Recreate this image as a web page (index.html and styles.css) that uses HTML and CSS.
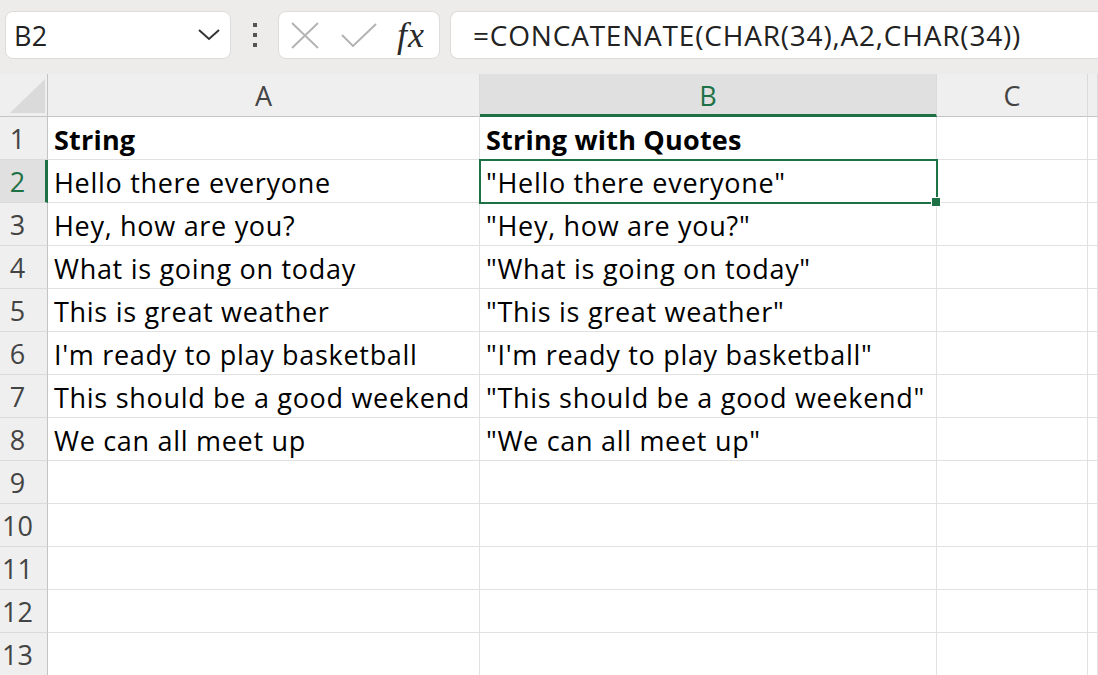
FILE: index.html
```html
<!DOCTYPE html>
<html>
<head>
<meta charset="utf-8">
<link rel="stylesheet" href="styles.css">
</head>
<body>
<div class="toolbar">
  <div class="namebox">
    <span class="name">B2</span>
    <svg class="chev" width="24" height="14" viewBox="0 0 24 14"><path d="M2 2 L12 11 L22 2" fill="none" stroke="#333" stroke-width="2"/></svg>
  </div>
  <div class="dots"><span></span><span></span><span></span></div>
  <div class="fxbox">
    <svg width="28" height="27" viewBox="0 0 28 27"><path d="M1 1 L27 26 M27 1 L1 26" stroke="#b4b4b4" stroke-width="2" fill="none"/></svg>
    <svg width="36" height="24" viewBox="0 0 36 24"><path d="M1 12 L12 23 L35 1" stroke="#b4b4b4" stroke-width="2" fill="none"/></svg>
    <span class="fx">fx</span>
  </div>
  <div class="formula">=CONCATENATE(CHAR(34),A2,CHAR(34))</div>
</div>
<div class="sheet">
  <div class="corner"><div class="tri"></div></div>
  <div class="colhead">A</div>
  <div class="colhead active">B</div>
  <div class="colhead">C</div>
  <div class="colhead"></div>

  <div class="rowhead">1</div><div class="cell bold">String</div><div class="cell bold">String with Quotes</div><div class="cell"></div><div class="cell"></div>
  <div class="rowhead active">2</div><div class="cell">Hello there everyone</div><div class="cell selected">"Hello there everyone"<span class="handle"></span></div><div class="cell"></div><div class="cell"></div>
  <div class="rowhead">3</div><div class="cell">Hey, how are you?</div><div class="cell">"Hey, how are you?"</div><div class="cell"></div><div class="cell"></div>
  <div class="rowhead">4</div><div class="cell">What is going on today</div><div class="cell">"What is going on today"</div><div class="cell"></div><div class="cell"></div>
  <div class="rowhead">5</div><div class="cell">This is great weather</div><div class="cell">"This is great weather"</div><div class="cell"></div><div class="cell"></div>
  <div class="rowhead">6</div><div class="cell">I'm ready to play basketball</div><div class="cell">"I'm ready to play basketball"</div><div class="cell"></div><div class="cell"></div>
  <div class="rowhead">7</div><div class="cell">This should be a good weekend</div><div class="cell">"This should be a good weekend"</div><div class="cell"></div><div class="cell"></div>
  <div class="rowhead">8</div><div class="cell">We can all meet up</div><div class="cell">"We can all meet up"</div><div class="cell"></div><div class="cell"></div>
  <div class="rowhead">9</div><div class="cell"></div><div class="cell"></div><div class="cell"></div><div class="cell"></div>
  <div class="rowhead">10</div><div class="cell"></div><div class="cell"></div><div class="cell"></div><div class="cell"></div>
  <div class="rowhead">11</div><div class="cell"></div><div class="cell"></div><div class="cell"></div><div class="cell"></div>
  <div class="rowhead">12</div><div class="cell"></div><div class="cell"></div><div class="cell"></div><div class="cell"></div>
  <div class="rowhead">13</div><div class="cell"></div><div class="cell"></div><div class="cell"></div><div class="cell"></div>
</div>
</body>
</html>
```
FILE: styles.css
```css
* { box-sizing: border-box; }
html, body { margin: 0; padding: 0; }
body {
  width: 1098px;
  height: 675px;
  overflow: hidden;
  background: #ffffff;
  font-family: "Open Sans", "Noto Sans", sans-serif;
}
.toolbar {
  height: 74px;
  background: #eeecea;
  display: flex;
  align-items: flex-start;
  padding: 11px 0 0 5px;
}
.namebox {
  width: 226px;
  height: 48px;
  background: #fff;
  border: 1px solid #dedcda;
  border-radius: 8px;
  display: flex;
  align-items: center;
  justify-content: space-between;
  padding: 0 9px 0 8px;
}
.name { font-size: 27px; color: #222; letter-spacing: 0.3px; }
.dots {
  width: 47px;
  height: 48px;
  display: flex;
  flex-direction: column;
  align-items: center;
  justify-content: center;
  gap: 6px;
}
.dots span { width: 4px; height: 4px; background: #555; display: block; }
.fxbox {
  width: 162px;
  height: 48px;
  background: #fff;
  border: 1px solid #dedcda;
  border-radius: 8px;
  display: flex;
  align-items: center;
  padding: 0 0 0 12px;
  gap: 22px;
}
.fx {
  font-family: "Liberation Serif", "DejaVu Serif", serif;
  font-style: italic;
  font-size: 36px;
  color: #2a2a2a;
  margin-left: -2px;
  letter-spacing: 1px;
}
.formula {
  margin-left: 10px;
  flex: 1;
  height: 48px;
  background: #fff;
  border: 1px solid #dedcda;
  border-right: none;
  border-radius: 8px 0 0 8px;
  display: flex;
  align-items: center;
  padding-left: 22px;
  font-size: 28px;
  letter-spacing: 0.8px;
  color: #222;
  white-space: nowrap;
}
.sheet {
  display: grid;
  grid-template-columns: 48px 432px 457px 151px 10px;
  grid-template-rows: 43px;
  grid-auto-rows: 43px;
}
.corner {
  background: #efefef;
  border-right: 1px solid #c4c4c4;
  border-bottom: 1px solid #c4c4c4;
  position: relative;
}
.tri {
  position: absolute;
  left: 10px;
  top: 5px;
  width: 35px;
  height: 34px;
  background: #dadada;
  clip-path: polygon(100% 0, 100% 100%, 0 100%);
}
.colhead {
  background: #efefef;
  border-right: 1px solid #dadada;
  border-bottom: 1px solid #c4c4c4;
  display: flex;
  align-items: center;
  justify-content: center;
  font-size: 27px;
  color: #444;
}
.colhead.active {
  background: #e0e0e0;
  color: #1e7145;
  border-bottom: 3px solid #1e7145;
  padding-top: 2px;
}
.rowhead {
  background: #efefef;
  border-right: 1px solid #c4c4c4;
  border-bottom: 1px solid #dadada;
  display: flex;
  align-items: center;
  justify-content: center;
  padding-right: 12px;
  font-size: 27px;
  color: #444;
}
.rowhead.active {
  background: #e0e0e0;
  color: #1e7145;
  border-right: 3px solid #1e7145;
  padding-right: 10px;
}
.cell {
  border-right: 1px solid #e1e1e1;
  border-bottom: 1px solid #e1e1e1;
  display: flex;
  align-items: center;
  padding: 2px 0 0 6px;
  font-family: "Open Sans", sans-serif;
  font-size: 27px;
  letter-spacing: 0.7px;
  color: #000;
  white-space: nowrap;
  overflow: visible;
  position: relative;
}
.cell.bold { font-weight: 700; letter-spacing: 0.2px; }
.cell.selected {
  outline: 2px solid #1e7145;
  outline-offset: -1px;
  z-index: 2;
}
.handle {
  position: absolute;
  right: -5px;
  bottom: -5px;
  width: 8px;
  height: 8px;
  background: #1e7145;
  border: 1px solid #fff;
  box-sizing: content-box;
}
```
